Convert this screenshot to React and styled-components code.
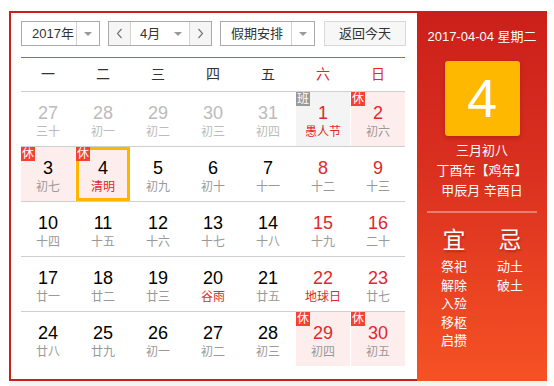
import React from 'react';
import styled, { createGlobalStyle, css } from 'styled-components';

const Global = createGlobalStyle`
  html, body { margin: 0; padding: 0; background: #fff; }
  body { font-family: "Liberation Sans", "Noto Sans CJK SC", sans-serif; color: #333; }
  * { box-sizing: border-box; }
`;

const Page = styled.div`
  padding: 11px 0 0 9px;
  width: 547px;
`;

const Widget = styled.div`
  display: flex;
  height: 370px;
`;

const Main = styled.div`
  width: 408px;
  height: 370px;
  border: 2px solid #cc1f1a;
  border-right: 0;
  padding: 8px 12px 0 10px;
  background: #fff;
`;

const BottomStrip = styled.div`
  height: 5px;
  width: 538px;
  background: #f4f4f4;
`;

const Toolbar = styled.div`
  display: flex;
  height: 25px;
  gap: 8px;
`;

const SelectBox = styled.div`
  display: flex;
  flex-shrink: 0;
  height: 25px;
  border: 1px solid #a9a9a9;
  background: #fff;
  font-size: 13px;
  line-height: 23px;
  color: #333;
`;

const SelectLabel = styled.div`
  width: ${p => p.$w}px;
  padding-left: ${p => p.$pl}px;
  white-space: nowrap;
`;

const ArrowPart = styled.div`
  width: 23px;
  border-left: 1px solid #d4d4d4;
  display: flex;
  align-items: center;
  justify-content: center;
`;

const Caret = styled.span`
  display: inline-block;
  width: 0;
  height: 0;
  border-left: 4px solid transparent;
  border-right: 4px solid transparent;
  border-top: 4px solid #999;
`;

const NavBtn = styled.div`
  width: 22px;
  background: #f5f5f5;
  display: flex;
  align-items: center;
  justify-content: center;
  ${p => p.$side === 'left' ? css`border-right: 1px solid #d4d4d4;` : css`border-left: 1px solid #d4d4d4;`}
`;

const MonthMid = styled.div`
  width: 58px;
  display: flex;
  align-items: center;
  justify-content: space-between;
  padding: 0 7px 0 9px;
`;

const TodayBtn = styled.div`
  margin-left: 1px;
  width: 82px;
  height: 25px;
  flex-shrink: 0;
  border: 1px solid #d8d8d8;
  background: #f7f7f7;
  font-size: 13px;
  line-height: 23px;
  text-align: center;
  color: #333;
`;

const RedLine = styled.div`
  margin-top: 11px;
  height: 1px;
  background: #e4493d;
`;

const WeekHeader = styled.div`
  display: grid;
  grid-template-columns: repeat(7, 54px);
  column-gap: 1px;
  height: 34px;
  border-bottom: 1px solid #cfcfcf;
`;

const WeekDay = styled.div`
  text-align: center;
  font-size: 14px;
  line-height: 33px;
  color: ${p => (p.$weekend ? '#e0282c' : '#333')};
`;

const Row = styled.div`
  display: grid;
  grid-template-columns: repeat(7, 54px);
  column-gap: 1px;
  height: 55px;
  border-bottom: ${p => (p.$last ? '0' : '1px solid #cfcfcf')};
`;

const Cell = styled.div`
  position: relative;
  height: 54px;
  padding-top: 11px;
  text-align: center;
  background: ${p => (p.$bg === 'rest' ? '#fdeeed' : p.$bg === 'work' ? '#f4f4f4' : 'transparent')};
  ${p => p.$selected && css`box-shadow: inset 0 0 0 3px #ffb400;`}
`;

const DayNum = styled.div`
  font-size: 18px;
  line-height: 20px;
  color: ${p => (p.$tone === 'other' ? '#bbb' : p.$tone === 'red' ? '#e0282c' : '#000')};
`;

const Lunar = styled.div`
  font-size: 12px;
  line-height: 16px;
  margin-top: 1px;
  color: ${p => (p.$tone === 'other' ? '#bbb' : p.$tone === 'red' ? '#e0282c' : '#999')};
`;

const Badge = styled.span`
  position: absolute;
  top: 0;
  left: 0;
  width: 14px;
  height: 14px;
  font-size: 12px;
  line-height: 14px;
  text-align: center;
  color: #fff;
  background: ${p => (p.$kind === 'work' ? '#999' : '#f5412f')};
`;

const Panel = styled.div`
  width: 130px;
  height: 370px;
  background: linear-gradient(180deg, #cb1f1a 0%, #db3120 45%, #f55224 100%);
  color: #fff;
  padding-top: 16px;
  display: flex;
  flex-direction: column;
  align-items: center;
`;

const PanelDate = styled.div`
  font-size: 13px;
  line-height: 20px;
  white-space: nowrap;
`;

const BigDay = styled.div`
  margin-top: 14px;
  width: 75px;
  height: 75px;
  border-radius: 3px;
  background: #ffb800;
  box-shadow: 0 2px 4px rgba(120, 20, 0, 0.35);
  font-size: 54px;
  line-height: 75px;
  text-align: center;
  color: #fff;
`;

const LunarInfo = styled.div`
  margin-top: 5px;
  font-size: 13px;
  line-height: 20px;
  text-align: center;
  white-space: nowrap;
`;

const Divider = styled.div`
  margin-top: 10px;
  width: 110px;
  height: 2px;
  background: rgba(255, 255, 255, 0.35);
`;

const Almanac = styled.div`
  margin-top: 13px;
  display: grid;
  grid-template-columns: 56px 56px;
`;

const AlmanacCol = styled.div`
  display: flex;
  flex-direction: column;
  align-items: center;
`;

const AlmanacHead = styled.div`
  font-size: 23px;
  line-height: 28px;
  margin-bottom: 4px;
  text-shadow: 1px 2px 2px rgba(120, 20, 0, 0.4);
`;

const AlmanacItem = styled.div`
  font-size: 13px;
  line-height: 18.5px;
`;

const Chevron = ({ dir }) => (
  <svg width="7" height="11" viewBox="0 0 7 11">
    <polyline
      points={dir === 'left' ? '5.5,1 1.5,5.5 5.5,10' : '1.5,1 5.5,5.5 1.5,10'}
      fill="none"
      stroke="#777"
      strokeWidth="1.2"
    />
  </svg>
);

const weeks = ['一', '二', '三', '四', '五', '六', '日'];

const d = (n, l, o = {}) => ({ n, l, ...o });

const rows = [
  [
    d(27, '三十', { other: true }), d(28, '初一', { other: true }), d(29, '初二', { other: true }),
    d(30, '初三', { other: true }), d(31, '初四', { other: true }),
    d(1, '愚人节', { fest: true, bg: 'work', badge: 'work' }),
    d(2, '初六', { bg: 'rest', badge: 'rest' }),
  ],
  [
    d(3, '初七', { bg: 'rest', badge: 'rest' }),
    d(4, '清明', { fest: true, bg: 'rest', badge: 'rest', selected: true }),
    d(5, '初九'), d(6, '初十'), d(7, '十一'), d(8, '十二'), d(9, '十三'),
  ],
  [d(10, '十四'), d(11, '十五'), d(12, '十六'), d(13, '十七'), d(14, '十八'), d(15, '十九'), d(16, '二十')],
  [d(17, '廿一'), d(18, '廿二'), d(19, '廿三'), d(20, '谷雨', { fest: true }), d(21, '廿五'), d(22, '地球日', { fest: true }), d(23, '廿七')],
  [
    d(24, '廿八'), d(25, '廿九'), d(26, '初一'), d(27, '初二'), d(28, '初三'),
    d(29, '初四', { bg: 'rest', badge: 'rest' }), d(30, '初五', { bg: 'rest', badge: 'rest' }),
  ],
];

const yi = ['祭祀', '解除', '入殓', '移柩', '启攒'];
const ji = ['动土', '破土'];

export default function App() {
  return (
    <>
      <Global />
      <Page>
        <Widget>
          <Main>
            <Toolbar>
              <SelectBox>
                <SelectLabel $w={54} $pl={10}>2017年</SelectLabel>
                <ArrowPart><Caret /></ArrowPart>
              </SelectBox>
              <SelectBox>
                <NavBtn $side="left"><Chevron dir="left" /></NavBtn>
                <MonthMid><span>4月</span><Caret /></MonthMid>
                <NavBtn $side="right"><Chevron dir="right" /></NavBtn>
              </SelectBox>
              <SelectBox>
                <SelectLabel $w={70} $pl={10}>假期安排</SelectLabel>
                <ArrowPart><Caret /></ArrowPart>
              </SelectBox>
              <TodayBtn>返回今天</TodayBtn>
            </Toolbar>
            <RedLine />
            <WeekHeader>
              {weeks.map((w, i) => (
                <WeekDay key={w} $weekend={i >= 5}>{w}</WeekDay>
              ))}
            </WeekHeader>
            {rows.map((row, ri) => (
              <Row key={ri} $last={ri === rows.length - 1}>
                {row.map((c, ci) => {
                  const numTone = c.other ? 'other' : ci >= 5 ? 'red' : 'normal';
                  const lunarTone = c.other ? 'other' : c.fest ? 'red' : 'normal';
                  return (
                    <Cell key={ci} $bg={c.bg} $selected={c.selected}>
                      {c.badge && <Badge $kind={c.badge}>{c.badge === 'work' ? '班' : '休'}</Badge>}
                      <DayNum $tone={numTone}>{c.n}</DayNum>
                      <Lunar $tone={lunarTone}>{c.l}</Lunar>
                    </Cell>
                  );
                })}
              </Row>
            ))}
          </Main>
          <Panel>
            <PanelDate>2017-04-04 星期二</PanelDate>
            <BigDay>4</BigDay>
            <LunarInfo>
              三月初八<br />
              丁酉年【鸡年】<br />
              甲辰月 辛酉日
            </LunarInfo>
            <Divider />
            <Almanac>
              <AlmanacCol>
                <AlmanacHead>宜</AlmanacHead>
                {yi.map(t => <AlmanacItem key={t}>{t}</AlmanacItem>)}
              </AlmanacCol>
              <AlmanacCol>
                <AlmanacHead>忌</AlmanacHead>
                {ji.map(t => <AlmanacItem key={t}>{t}</AlmanacItem>)}
              </AlmanacCol>
            </Almanac>
          </Panel>
        </Widget>
        <BottomStrip />
      </Page>
    </>
  );
}
